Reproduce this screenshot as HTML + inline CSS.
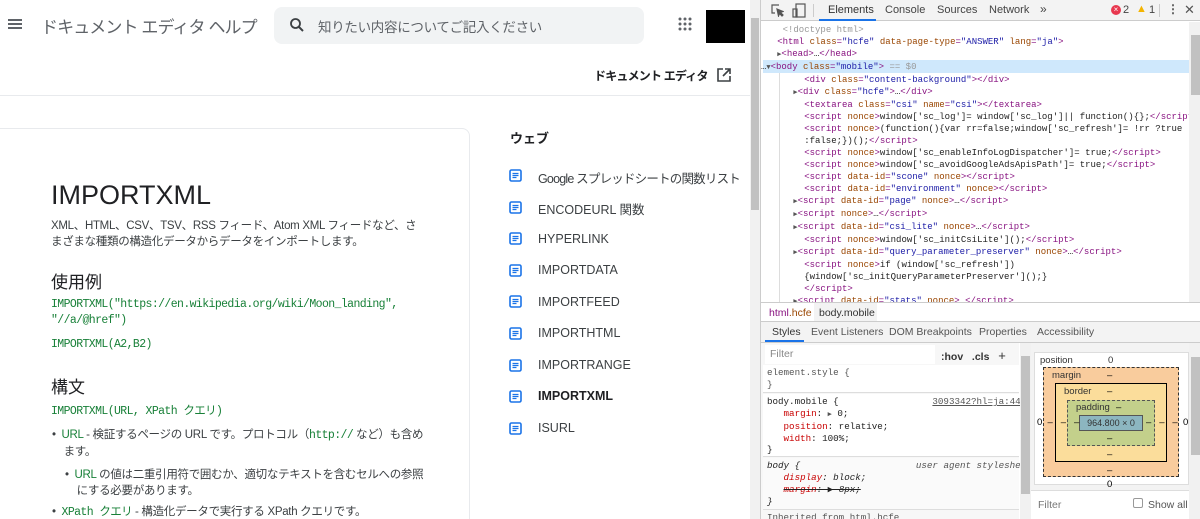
<!DOCTYPE html>
<html lang="ja"><head><meta charset="utf-8">
<style>
*{box-sizing:border-box;margin:0;padding:0}
body{width:1200px;height:519px;overflow:hidden;position:relative;background:#fff;font-family:"Liberation Sans","Noto Sans CJK JP",sans-serif}
.a{position:absolute;white-space:nowrap}
.mono{font-family:"Liberation Mono","Noto Sans CJK JP",monospace;letter-spacing:-0.6px}
.g{color:#188038}
.side div.it{position:absolute;left:29px;font-size:12.5px;color:#3c4043;white-space:nowrap}
.side svg{position:absolute;left:0}
.dt{font-family:"Liberation Mono",monospace;font-size:9px;white-space:pre;color:#222}
.t{color:#881280}.n{color:#994500}.v{color:#1a1aa6}.c{color:#999}
.tri{color:#555;font-size:7px}
.sty{font-family:"Liberation Mono",monospace;font-size:9.2px;white-space:pre;color:#222}
.p{color:#c80000}
</style></head><body>
<div class="a" style="left:0;top:0;width:750px;height:519px;overflow:hidden">
  <div class="a" style="left:8px;top:19px;width:14px;height:2px;background:#5f6368;box-shadow:0 4px 0 #5f6368,0 8px 0 #5f6368"></div>
  <div class="a" style="left:41px;top:13px;font-size:17px;color:#5f6368;letter-spacing:-0.9px">ドキュメント エディタ ヘルプ</div>
  <div class="a" style="left:274px;top:7px;width:370px;height:37px;background:#f1f3f4;border-radius:8px"></div>
  <svg class="a" style="left:288px;top:16px" width="18" height="18" viewBox="0 0 24 24"><circle cx="10" cy="10" r="6" fill="none" stroke="#3c4043" stroke-width="2.4"/><path d="M14.5 14.5L20 20" stroke="#3c4043" stroke-width="2.6"/></svg>
  <div class="a" style="left:318px;top:16px;font-size:13.5px;color:#5f6368;letter-spacing:-0.3px">知りたい内容についてご記入ください</div>
  <svg class="a" style="left:678px;top:17px" width="14" height="14" viewBox="0 0 14 14" fill="#5f6368"><circle cx="2" cy="2" r="1.5"/><circle cx="7" cy="2" r="1.5"/><circle cx="12" cy="2" r="1.5"/><circle cx="2" cy="7" r="1.5"/><circle cx="7" cy="7" r="1.5"/><circle cx="12" cy="7" r="1.5"/><circle cx="2" cy="12" r="1.5"/><circle cx="7" cy="12" r="1.5"/><circle cx="12" cy="12" r="1.5"/></svg>
  <div class="a" style="left:706px;top:10px;width:39px;height:33px;background:#000"></div>
  <div class="a" style="left:594px;top:67px;font-size:12px;color:#202124;font-weight:bold;letter-spacing:-0.8px">ドキュメント エディタ</div>
  <svg class="a" style="left:716px;top:67px" width="16" height="16" viewBox="0 0 16 16" fill="none" stroke="#3c4043" stroke-width="1.6"><path d="M7 2H2v12h12V9M9 2h5v5M14 2L7 9"/></svg>
  <div class="a" style="left:0;top:95px;width:750px;height:1px;background:#e8eaed"></div>
  <div class="a" style="left:-1px;top:128px;width:471px;height:400px;border:1px solid #e8eaed;border-radius:0 8px 0 0"></div>
  <div class="a" style="left:51px;top:180px;font-size:27px;color:#202124">IMPORTXML</div>
  <div class="a" style="left:51px;top:218px;font-size:11.5px;line-height:16px;color:#3c4043;letter-spacing:-0.3px">XML、HTML、CSV、TSV、RSS フィード、Atom XML フィードなど、さ<br>まざまな種類の構造化データからデータをインポートします。</div>
  <div class="a" style="left:51px;top:268px;font-size:17px;color:#202124">使用例</div>
  <div class="a mono g" style="left:51px;top:297px;font-size:11.5px;line-height:16px">IMPORTXML("https://en.wikipedia.org/wiki/Moon_landing",<br>"//a/@href")</div>
  <div class="a mono g" style="left:51px;top:338px;font-size:11.5px">IMPORTXML(A2,B2)</div>
  <div class="a" style="left:51px;top:373px;font-size:17px;color:#202124">構文</div>
  <div class="a mono g" style="left:51px;top:402px;font-size:11.5px">IMPORTXML(URL, XPath クエリ)</div>
  <div class="a" style="left:52px;top:427px;font-size:11.5px;line-height:16px;color:#3c4043;letter-spacing:-0.3px">•&nbsp; <span class="g">URL</span> - 検証するページの URL です。プロトコル（<span class="mono g">http://</span> など）も含め<br>&nbsp;&nbsp;&nbsp;&nbsp;ます。</div>
  <div class="a" style="left:65px;top:467px;font-size:11.5px;line-height:16px;color:#3c4043;letter-spacing:-0.3px">•&nbsp; <span class="g">URL</span> の値は二重引用符で囲むか、適切なテキストを含むセルへの参照<br>&nbsp;&nbsp;&nbsp;&nbsp;にする必要があります。</div>
  <div class="a" style="left:52px;top:503px;font-size:11.5px;color:#3c4043;letter-spacing:-0.3px">•&nbsp; <span class="mono g">XPath クエリ</span> - 構造化データで実行する XPath クエリです。</div>
  <div class="a" style="left:510px;top:128px;font-size:13px;font-weight:bold;color:#202124">ウェブ</div>
  <div class="a side" style="left:509px;top:0">
    <svg style="top:169px" width="13" height="13" viewBox="0 0 13 13"><rect x="1" y="1" width="11" height="11" rx="1.5" fill="none" stroke="#1a73e8" stroke-width="1.6"/><path d="M3.5 4.5h6M3.5 6.5h6M3.5 8.5h4" stroke="#1a73e8" stroke-width="1.2"/></svg><div class="it" style="top:168px;letter-spacing:-0.8px">Google スプレッドシートの関数リスト</div>
    <svg style="top:201px" width="13" height="13" viewBox="0 0 13 13"><rect x="1" y="1" width="11" height="11" rx="1.5" fill="none" stroke="#1a73e8" stroke-width="1.6"/><path d="M3.5 4.5h6M3.5 6.5h6M3.5 8.5h4" stroke="#1a73e8" stroke-width="1.2"/></svg><div class="it" style="top:199px">ENCODEURL 関数</div>
    <svg style="top:232px" width="13" height="13" viewBox="0 0 13 13"><rect x="1" y="1" width="11" height="11" rx="1.5" fill="none" stroke="#1a73e8" stroke-width="1.6"/><path d="M3.5 4.5h6M3.5 6.5h6M3.5 8.5h4" stroke="#1a73e8" stroke-width="1.2"/></svg><div class="it" style="top:232px">HYPERLINK</div>
    <svg style="top:264px" width="13" height="13" viewBox="0 0 13 13"><rect x="1" y="1" width="11" height="11" rx="1.5" fill="none" stroke="#1a73e8" stroke-width="1.6"/><path d="M3.5 4.5h6M3.5 6.5h6M3.5 8.5h4" stroke="#1a73e8" stroke-width="1.2"/></svg><div class="it" style="top:263px">IMPORTDATA</div>
    <svg style="top:295px" width="13" height="13" viewBox="0 0 13 13"><rect x="1" y="1" width="11" height="11" rx="1.5" fill="none" stroke="#1a73e8" stroke-width="1.6"/><path d="M3.5 4.5h6M3.5 6.5h6M3.5 8.5h4" stroke="#1a73e8" stroke-width="1.2"/></svg><div class="it" style="top:295px">IMPORTFEED</div>
    <svg style="top:327px" width="13" height="13" viewBox="0 0 13 13"><rect x="1" y="1" width="11" height="11" rx="1.5" fill="none" stroke="#1a73e8" stroke-width="1.6"/><path d="M3.5 4.5h6M3.5 6.5h6M3.5 8.5h4" stroke="#1a73e8" stroke-width="1.2"/></svg><div class="it" style="top:326px">IMPORTHTML</div>
    <svg style="top:359px" width="13" height="13" viewBox="0 0 13 13"><rect x="1" y="1" width="11" height="11" rx="1.5" fill="none" stroke="#1a73e8" stroke-width="1.6"/><path d="M3.5 4.5h6M3.5 6.5h6M3.5 8.5h4" stroke="#1a73e8" stroke-width="1.2"/></svg><div class="it" style="top:358px">IMPORTRANGE</div>
    <svg style="top:390px" width="13" height="13" viewBox="0 0 13 13"><rect x="1" y="1" width="11" height="11" rx="1.5" fill="none" stroke="#1a73e8" stroke-width="1.6"/><path d="M3.5 4.5h6M3.5 6.5h6M3.5 8.5h4" stroke="#1a73e8" stroke-width="1.2"/></svg><div class="it" style="top:389px;font-weight:bold;color:#202124">IMPORTXML</div>
    <svg style="top:422px" width="13" height="13" viewBox="0 0 13 13"><rect x="1" y="1" width="11" height="11" rx="1.5" fill="none" stroke="#1a73e8" stroke-width="1.6"/><path d="M3.5 4.5h6M3.5 6.5h6M3.5 8.5h4" stroke="#1a73e8" stroke-width="1.2"/></svg><div class="it" style="top:421px">ISURL</div>
  </div>
</div>
<div class="a" style="left:750px;top:0;width:10px;height:519px;background:#f1f1f1"></div>
<div class="a" style="left:751px;top:18px;width:8px;height:192px;background:#c1c1c1"></div>
<div class="a" style="left:760px;top:0;width:440px;height:519px;background:#fff;border-left:1px solid #ccc;overflow:hidden">
  <div class="a" style="left:0;top:0;width:440px;height:21px;background:#f3f3f3;border-bottom:1px solid #ccc"></div>
  <svg class="a" style="left:10px;top:4px" width="13" height="13" viewBox="0 0 13 13" fill="none" stroke="#555" stroke-width="1.2"><path d="M8 1H1v8h3"/><path d="M6 5l6 2.5-2.5 1 2.5 2.5-1 1-2.5-2.5-1 2.5z" fill="#555"/></svg>
  <svg class="a" style="left:31px;top:3px" width="14" height="15" viewBox="0 0 14 15" fill="none" stroke="#555" stroke-width="1.2"><rect x="4" y="1" width="9" height="13"/><rect x="1" y="6" width="4" height="8"/></svg>
  <div class="a" style="left:52px;top:4px;width:1px;height:13px;background:#ccc"></div>
  <div class="a" style="left:67px;top:4px;font-size:11px;color:#333">Elements</div>
  <div class="a" style="left:58px;top:19px;width:57px;height:2px;background:#1a73e8"></div>
  <div class="a" style="left:124px;top:4px;font-size:11px;color:#444">Console</div>
  <div class="a" style="left:176px;top:4px;font-size:11px;color:#444">Sources</div>
  <div class="a" style="left:228px;top:4px;font-size:11px;color:#444">Network</div>
  <div class="a" style="left:279px;top:2px;font-size:12px;color:#444">»</div>
  <div class="a" style="left:350px;top:5px;width:10px;height:10px;border-radius:50%;background:#e8384f;color:#fff;font-size:8px;line-height:10px;text-align:center">×</div>
  <div class="a" style="left:362px;top:4px;font-size:11px;color:#444">2</div>
  <div class="a" style="left:375px;top:3px;font-size:11px;color:#f4b400">▲</div>
  <div class="a" style="left:388px;top:4px;font-size:11px;color:#444">1</div>
  <div class="a" style="left:398px;top:4px;width:1px;height:13px;background:#ccc"></div>
  <div class="a" style="left:406px;top:2px;font-size:12px;color:#555;font-weight:bold">⋮</div>
  <div class="a" style="left:423px;top:2px;font-size:13px;color:#555">✕</div>
  <div class="a" style="left:2px;top:60px;width:426px;height:13px;background:#cfe8fc"></div>
  <div class="a" style="left:18px;top:73px;width:1px;height:229px;background:#ddd"></div>
  <div class="a dt" style="left:0;top:24px;line-height:12px">    <span class="c">&lt;!doctype html&gt;</span>
   <span class="t">&lt;html</span> <span class="n">class</span><span class="t">=</span><span class="v">"hcfe"</span> <span class="n">data-page-type</span><span class="t">=</span><span class="v">"ANSWER"</span> <span class="n">lang</span><span class="t">=</span><span class="v">"ja"</span><span class="t">&gt;</span>
   <span class="tri">▶</span><span class="t">&lt;head&gt;</span>…<span class="t">&lt;/head&gt;</span>
<span style="color:#333">…</span><span class="tri">▼</span><span class="t">&lt;body</span> <span class="n">class</span><span class="t">=</span><span class="v">"mobile"</span><span class="t">&gt;</span> <span class="c">== $0</span>
        <span class="t">&lt;div</span> <span class="n">class</span><span class="t">=</span><span class="v">"content-background"</span><span class="t">&gt;&lt;/div&gt;</span>
      <span class="tri">▶</span><span class="t">&lt;div</span> <span class="n">class</span><span class="t">=</span><span class="v">"hcfe"</span><span class="t">&gt;</span>…<span class="t">&lt;/div&gt;</span>
        <span class="t">&lt;textarea</span> <span class="n">class</span><span class="t">=</span><span class="v">"csi"</span> <span class="n">name</span><span class="t">=</span><span class="v">"csi"</span><span class="t">&gt;&lt;/textarea&gt;</span>
        <span class="t">&lt;script</span> <span class="n">nonce</span><span class="t">&gt;</span>window['sc_log']= window['sc_log']|| function(){};<span class="t">&lt;/script&gt;</span>
        <span class="t">&lt;script</span> <span class="n">nonce</span><span class="t">&gt;</span>(function(){var rr=false;window['sc_refresh']= !rr ?true
        :false;})();<span class="t">&lt;/script&gt;</span>
        <span class="t">&lt;script</span> <span class="n">nonce</span><span class="t">&gt;</span>window['sc_enableInfoLogDispatcher']= true;<span class="t">&lt;/script&gt;</span>
        <span class="t">&lt;script</span> <span class="n">nonce</span><span class="t">&gt;</span>window['sc_avoidGoogleAdsApisPath']= true;<span class="t">&lt;/script&gt;</span>
        <span class="t">&lt;script</span> <span class="n">data-id</span><span class="t">=</span><span class="v">"scone"</span> <span class="n">nonce</span><span class="t">&gt;&lt;/script&gt;</span>
        <span class="t">&lt;script</span> <span class="n">data-id</span><span class="t">=</span><span class="v">"environment"</span> <span class="n">nonce</span><span class="t">&gt;&lt;/script&gt;</span>
      <span class="tri">▶</span><span class="t">&lt;script</span> <span class="n">data-id</span><span class="t">=</span><span class="v">"page"</span> <span class="n">nonce</span><span class="t">&gt;</span>…<span class="t">&lt;/script&gt;</span>
      <span class="tri">▶</span><span class="t">&lt;script</span> <span class="n">nonce</span><span class="t">&gt;</span>…<span class="t">&lt;/script&gt;</span>
      <span class="tri">▶</span><span class="t">&lt;script</span> <span class="n">data-id</span><span class="t">=</span><span class="v">"csi_lite"</span> <span class="n">nonce</span><span class="t">&gt;</span>…<span class="t">&lt;/script&gt;</span>
        <span class="t">&lt;script</span> <span class="n">nonce</span><span class="t">&gt;</span>window['sc_initCsiLite']();<span class="t">&lt;/script&gt;</span>
      <span class="tri">▶</span><span class="t">&lt;script</span> <span class="n">data-id</span><span class="t">=</span><span class="v">"query_parameter_preserver"</span> <span class="n">nonce</span><span class="t">&gt;</span>…<span class="t">&lt;/script&gt;</span>
        <span class="t">&lt;script</span> <span class="n">nonce</span><span class="t">&gt;</span>if (window['sc_refresh'])
        {window['sc_initQueryParameterPreserver']();}
        <span class="t">&lt;/script&gt;</span>
      <span class="tri">▶</span><span class="t">&lt;script</span> <span class="n">data-id</span><span class="t">=</span><span class="v">"stats"</span> <span class="n">nonce</span><span class="t">&gt;</span>…<span class="t">&lt;/script&gt;</span></div>
  <div class="a" style="left:428px;top:22px;width:12px;height:280px;background:#f1f1f1"></div>
  <div class="a" style="left:430px;top:35px;width:9px;height:60px;background:#c1c1c1"></div>
  <div class="a" style="left:0;top:302px;width:440px;height:20px;background:#fff;border-top:1px solid #ccc;border-bottom:1px solid #ccc"></div>
  <div class="a" style="left:53px;top:303px;width:63px;height:18px;background:#f3f3f3"></div>
  <div class="a" style="left:8px;top:307px;font-size:10.5px;color:#881280">html<span style="color:#994500">.hcfe</span></div>
  <div class="a" style="left:58px;top:307px;font-size:10.5px;color:#333">body.mobile</div>
  <div class="a" style="left:0;top:322px;width:440px;height:21px;background:#f3f3f3;border-bottom:1px solid #ccc"></div>
  <div class="a" style="left:11px;top:326px;font-size:10.5px;color:#333">Styles</div>
  <div class="a" style="left:4px;top:340px;width:39px;height:2px;background:#1a73e8"></div>
  <div class="a" style="left:50px;top:326px;font-size:10.5px;color:#555">Event Listeners</div>
  <div class="a" style="left:128px;top:326px;font-size:10.5px;color:#555">DOM Breakpoints</div>
  <div class="a" style="left:218px;top:326px;font-size:10.5px;color:#555">Properties</div>
  <div class="a" style="left:276px;top:326px;font-size:10.5px;color:#555">Accessibility</div>
  <div class="a" style="left:0;top:343px;width:258px;height:176px;background:#f7f7f7"></div>
  <div class="a" style="left:4px;top:345px;width:170px;height:19px;background:#fff"></div>
  <div class="a" style="left:9px;top:348px;font-size:10.5px;color:#888">Filter</div>
  <div class="a" style="left:180px;top:348px;font-size:10.5px;color:#333;font-weight:bold">:hov&nbsp;&nbsp; .cls&nbsp;&nbsp;&nbsp;<span style="font-weight:normal;font-size:13px">+</span></div>
  <div class="a" style="left:2px;top:365px;width:256px;height:28px;background:#fff;border-bottom:1px solid #ddd"></div>
  <div class="a sty" style="left:6px;top:367px;line-height:12px;color:#555">element.style {
}</div>
  <div class="a" style="left:2px;top:394px;width:256px;height:63px;background:#fff;border-bottom:1px solid #ddd"></div>
  <div class="a sty" style="left:6px;top:396px;line-height:11.5px">body.mobile {                 <span style="color:#555;text-decoration:underline">3093342?hl=ja:446</span>
   <span class="p">margin</span>: <span class="tri">▶</span> 0;
   <span class="p">position</span>: relative;
   <span class="p">width</span>: 100%;
}</div>
  <div class="a" style="left:2px;top:458px;width:256px;height:52px;background:#fafafa;border-bottom:1px solid #ddd"></div>
  <div class="a sty" style="left:6px;top:460px;line-height:12px;font-style:italic">body {                     <span style="color:#555">user agent stylesheet</span>
   <span class="p">display</span>: block;
   <s><span class="p">margin</span>: ▶ 8px;</s>
}</div>
  <div class="a sty" style="left:6px;top:512px;color:#555">Inherited from html.hcfe</div>
  <div class="a" style="left:259px;top:343px;width:11px;height:176px;background:#f1f1f1"></div>
  <div class="a" style="left:260px;top:356px;width:9px;height:138px;background:#c1c1c1"></div>
  <div class="a" style="left:270px;top:343px;width:158px;height:176px;background:#f3f3f3"></div>
  <div class="a" style="left:273px;top:352px;width:155px;height:133px;background:#fff;border:1px solid #ddd"></div>
  <div class="a" style="left:279px;top:355px;font-size:9.5px;color:#333">position</div>
  <div class="a" style="left:347px;top:355px;font-size:9.5px;color:#333">0</div>
  <div class="a" style="left:282px;top:367px;width:136px;height:110px;background:#f9cc9d;border:1px dashed #333"></div>
  <div class="a" style="left:291px;top:370px;font-size:9.5px;color:#333">margin</div>
  <div class="a" style="left:294px;top:383px;width:112px;height:79px;background:#fbdd9b;border:1px solid #000"></div>
  <div class="a" style="left:303px;top:386px;font-size:9.5px;color:#333">border</div>
  <div class="a" style="left:306px;top:400px;width:88px;height:46px;background:#c3d08b;border:1px dashed #555"></div>
  <div class="a" style="left:315px;top:402px;font-size:9.5px;color:#333">padding</div>
  <div class="a" style="left:318px;top:415px;width:64px;height:16px;background:#8cb6c0;border:1px solid #555;font-size:9px;color:#333;text-align:center;line-height:14px">964.800 × 0</div>
  <div class="a" style="left:346px;top:370px;font-size:9.5px">–</div>
  <div class="a" style="left:346px;top:386px;font-size:9.5px">–</div>
  <div class="a" style="left:355px;top:402px;font-size:9.5px">–</div>
  <div class="a" style="left:346px;top:433px;font-size:9.5px">–</div>
  <div class="a" style="left:346px;top:449px;font-size:9.5px">–</div>
  <div class="a" style="left:346px;top:465px;font-size:9.5px">–</div>
  <div class="a" style="left:346px;top:479px;font-size:9.5px">0</div>
  <div class="a" style="left:276px;top:417px;font-size:9.5px">0&nbsp; –&nbsp;&nbsp; –&nbsp;&nbsp; –</div>
  <div class="a" style="left:385px;top:417px;font-size:9.5px">–&nbsp;&nbsp; –&nbsp;&nbsp; –&nbsp; 0</div>
  <div class="a" style="left:270px;top:490px;width:158px;height:29px;background:#fff;border-top:1px solid #ddd"></div>
  <div class="a" style="left:277px;top:499px;font-size:10.5px;color:#777">Filter</div>
  <div class="a" style="left:372px;top:498px;width:10px;height:10px;border:1px solid #999;border-radius:2px;background:#fff"></div>
  <div class="a" style="left:387px;top:499px;font-size:10.5px;color:#555">Show all</div>
  <div class="a" style="left:428px;top:343px;width:12px;height:176px;background:#f1f1f1"></div>
  <div class="a" style="left:430px;top:357px;width:9px;height:98px;background:#c1c1c1"></div>
</div>
</body></html>
